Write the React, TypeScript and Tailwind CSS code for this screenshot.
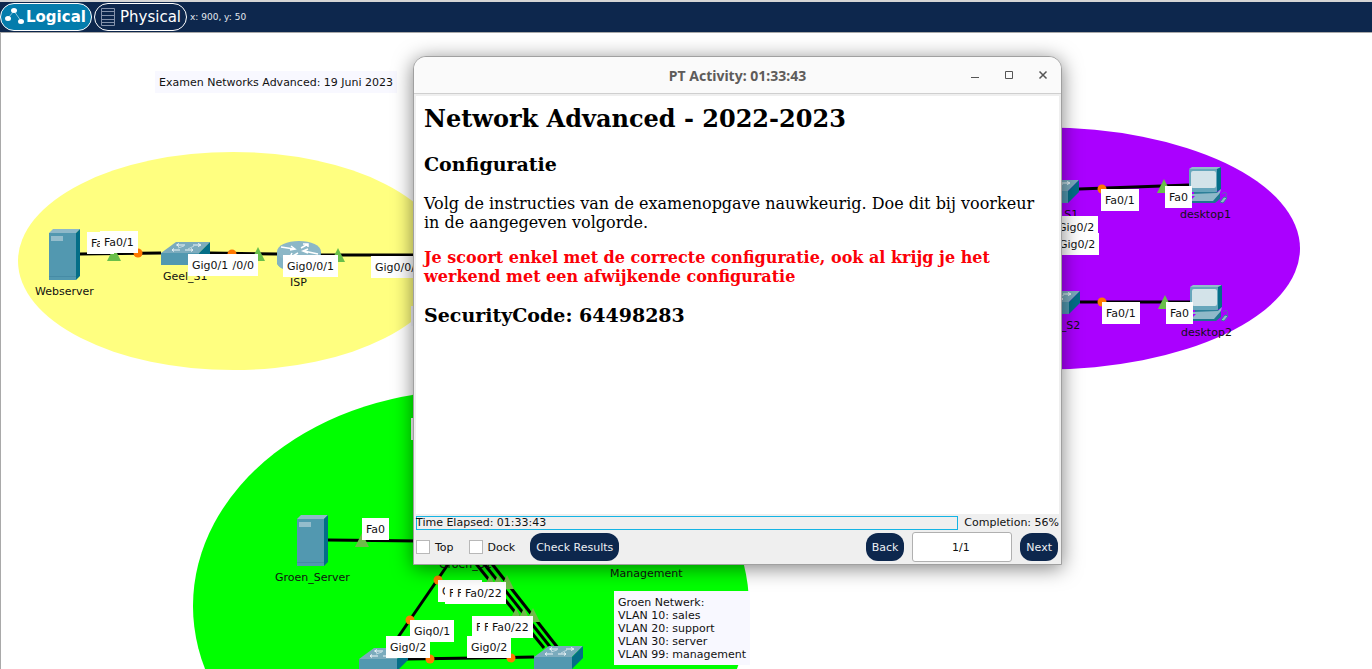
import type { CSSProperties, ReactNode } from "react";

// The inner edge of the canvas frame, in window coordinates.
const ORIGIN = { x: 1, y: 33 };

function place(x: number, y: number): CSSProperties {
  return { left: x - ORIGIN.x, top: y - ORIGIN.y };
}

type Item = { x: number; y: number; text: string };

const deviceNames: Item[] = [
  { x: 35, y: 285, text: "Webserver" },
  { x: 163, y: 270, text: "Geel_S1" },
  { x: 290, y: 276, text: "ISP" },
  { x: 1180, y: 208, text: "desktop1" },
  { x: 1029, y: 208, text: "Paars_S1" },
  { x: 1181, y: 326, text: "desktop2" },
  { x: 1031, y: 319, text: "Paars_S2" },
  { x: 275, y: 571, text: "Groen_Server" },
  { x: 439, y: 558, text: "Groen_S1" },
  { x: 610, y: 567, text: "Management" },
];

const portLabels: Item[] = [
  { x: 87, y: 232, text: "Fa0" },
  { x: 100, y: 231, text: "Fa0/1" },
  { x: 203, y: 254, text: "Gig0/0/0" },
  { x: 188, y: 254, text: "Gig0/1" },
  { x: 283, y: 255, text: "Gig0/0/1" },
  { x: 371, y: 256, text: "Gig0/0/0" },
  { x: 1054, y: 216, text: "Gig0/2" },
  { x: 1055, y: 233, text: "Gig0/2" },
  { x: 1101, y: 189, text: "Fa0/1" },
  { x: 1165, y: 186, text: "Fa0" },
  { x: 1102, y: 302, text: "Fa0/1" },
  { x: 1166, y: 302, text: "Fa0" },
  { x: 362, y: 518, text: "Fa0" },
  { x: 411, y: 418, text: "Fa0/2" },
  { x: 438, y: 580, text: "Gig0/1" },
  { x: 445, y: 582, text: "Fa0/20" },
  { x: 453, y: 582, text: "Fa0/21" },
  { x: 461, y: 582, text: "Fa0/22" },
  { x: 472, y: 616, text: "Fa0/20" },
  { x: 480, y: 616, text: "Fa0/21" },
  { x: 488, y: 616, text: "Fa0/22" },
  { x: 410, y: 620, text: "Gig0/1" },
  { x: 386, y: 636, text: "Gig0/2" },
  { x: 467, y: 636, text: "Gig0/2" },
];

const wires = [
  [80, 254, 161, 253],
  [210, 253, 278, 254],
  [321, 255, 420, 255],
  [1079, 189, 1189, 185],
  [1080, 302, 1190, 302],
  [328, 540, 420, 541],
  [451, 560, 392, 646],
  [407, 659, 534, 657],
  [473, 560, 544, 648],
  [481, 560, 551, 648],
  [489, 560, 558, 648],
];

const upMarks = [
  [114, 247],
  [258, 247],
  [338, 248],
  [1164, 179],
  [1165, 295],
];

const dimMarks = [
  [362, 533],
  [490, 575],
  [498, 575],
  [507, 575],
  [516, 608],
  [524, 608],
  [533, 608],
];

const waitMarks = [
  [138, 253],
  [232, 254],
  [1102, 189],
  [1102, 302],
  [438, 580],
  [410, 620],
  [430, 659],
  [511, 658],
];

function Server({ x, y }: { x: number; y: number }) {
  return (
    <g transform={`translate(${x} ${y})`}>
      <path d="M0 4L4 0H31L27 4Z" fill="#8fb9c9" />
      <path d="M27 4L31 0V47L27 51Z" fill="#046e87" />
      <rect y="4" width="27" height="47" fill="#5298b0" />
      <rect x="2" y="7" width="12" height="5" fill="#94bdcc" />
      <path d="M0 47.5H27" stroke="#468ba5" />
    </g>
  );
}

function Switch({ x, y }: { x: number; y: number }) {
  return (
    <g transform={`translate(${x} ${y})`}>
      <path d="M0 11L15 0H49L38 11Z" fill="#7babbd" />
      <path d="M38 11L49 0V12L38 23Z" fill="#046e87" />
      <rect y="11" width="38" height="12" fill="#5298b0" />
      <g fill="none" stroke="#eef5f8" strokeWidth="1">
        <path d="M24 3H16M18 1.500L15.500 3L18 4.500M32 3H39M37 1.500L40 3L37 4.500" />
        <path d="M19 8H12M13 6.500L11 8L13 9.500M24 8H31M30 6.500L32 8L30 9.500" />
        <path d="M17 6L23 4M27 7L33 4" strokeWidth="0.6" />
      </g>
    </g>
  );
}

function Router({ x, y }: { x: number; y: number }) {
  return (
    <g transform={`translate(${x} ${y})`}>
      <path d="M0 11V22C2 32 42 32 44 22V11Z" fill="#4f96ae" />
      <path d="M0 11V22C1 26 5 28 10 29V17Z" fill="#83b3c3" />
      <ellipse cx="22" cy="10.5" rx="22" ry="10.5" fill="#8cb7c7" />
      <g fill="none" stroke="#fff" strokeWidth="1.5">
        <path d="M4 6L17 8M14 5L18 8L13 9" />
        <path d="M24 7L31 3M26 3H31V6" />
        <path d="M41 13L27 10M31 8L26 10L31 12" />
        <path d="M21 12L14 16M15 12L13 16L18 17" />
      </g>
    </g>
  );
}

function Desktop({ x, y }: { x: number; y: number }) {
  return (
    <g transform={`translate(${x} ${y})`}>
      <path d="M0 2L3 0H32L30 2Z" fill="#91bccb" />
      <path d="M28 2L32 0V22L28 25Z" fill="#046e87" />
      <rect y="2" width="28" height="23" rx="1" fill="#66a6bb" />
      <rect x="2" y="4" width="25" height="17" rx="2" fill="#d3e3e9" />
      <path d="M5 25H29V28H5Z" fill="#2c7f98" />
      <path d="M3 27L28 26L32 22L30 29H2Z" fill="#8fb9c9" />
      <path d="M0 35L6 29H29L24 35Z" fill="#8fb9c9" />
      <path d="M24 34L31 26V32L26 36H0V34Z" fill="#1d7690" />
      <path d="M31 35L35 30L38 31L34 36Z" fill="#8fb9c9" stroke="#33829b" />
      <path d="M33 27C36 24 39 26 37 30" fill="none" stroke="#4b85a0" strokeWidth="0.8" />
    </g>
  );
}

function Topology() {
  return (
    <svg className="absolute inset-0 size-full overflow-visible" aria-hidden="true">
      <g transform={`translate(${-ORIGIN.x} ${-ORIGIN.y})`}>
        <ellipse cx="233" cy="261" rx="215" ry="109" fill="#ffff80" />
        <ellipse cx="1045" cy="248.500" rx="255" ry="121" fill="#aa00ff" />
        <ellipse cx="471" cy="606" rx="278" ry="216" fill="#00ff00" />
        <g stroke="#000" strokeWidth="3">
          {wires.map(([x1, y1, x2, y2], i) => (
            <line key={i} x1={x1} y1={y1} x2={x2} y2={y2} />
          ))}
        </g>
        <Server x={49} y={229} />
        <Server x={297} y={515} />
        <Switch x={161} y={242} />
        <Switch x={1030} y={180} />
        <Switch x={1031} y={291} />
        <Switch x={359} y={648} />
        <Switch x={534} y={646} />
        <Router x={277} y={241} />
        <Desktop x={1189} y={167} />
        <Desktop x={1190} y={285} />
        {waitMarks.map(([x, y], i) => (
          <circle key={i} cx={x} cy={y} r="4.500" fill="#ff7800" />
        ))}
        {upMarks.map(([x, y], i) => (
          <path key={i} d={`M${x} ${y}l7 14h-14z`} fill="#69bf4a" />
        ))}
        {dimMarks.map(([x, y], i) => (
          <path key={i} d={`M${x} ${y}l7 14h-14z`} fill="#70bb4a" />
        ))}
      </g>
    </svg>
  );
}

function Toolbar() {
  return (
    <header className="flex h-8 shrink-0 items-center gap-[2px] border-t-2 border-[#d5d5d5] bg-[#0d274d]">
      <button className="flex h-7 w-[92px] items-center gap-[2px] rounded-full border border-white bg-[#047cac] pl-[3px] text-[15px] font-bold text-white">
        <svg className="h-5 w-5" viewBox="0 0 20 20" aria-hidden="true">
          <path d="M4 11L10 4L17 14" fill="none" stroke="#8cc4dd" strokeWidth="1" />
          <ellipse cx="4" cy="11.500" rx="3" ry="2.500" fill="#fff" />
          <ellipse cx="10" cy="3.500" rx="3" ry="2.500" fill="#fff" />
          <ellipse cx="17" cy="14.500" rx="3" ry="2.500" fill="#fff" />
        </svg>
        Logical
      </button>
      <button className="flex h-7 w-[93px] items-center gap-1 rounded-full border border-white pl-[5px] text-[15px] text-white">
        <svg className="h-5 w-4" viewBox="0 0 16 20" aria-hidden="true">
          <path
            d="M1.500 1.500H14.500V18.500H1.500ZM1.500 4.500H14.500M1.500 8.500H14.500M1.500 12.500H14.500M1.500 15.500H14.500"
            fill="none"
            stroke="#8492ab"
          />
        </svg>
        Physical
      </button>
      <span className="pl-px text-[9px] text-[#e3e7ee]">x: 900, y: 50</span>
    </header>
  );
}

function PillButton({ children }: { children: ReactNode }) {
  return (
    <button className="h-7 rounded-[12px] bg-[#0d274d] px-[6px] text-[11px] text-[#eef0f4]">{children}</button>
  );
}

function Tick({ label }: { label: string }) {
  return (
    <label className="flex items-center gap-[5px]">
      <input type="checkbox" className="size-[14px] appearance-none border border-[#b8b8b8] bg-white" />
      {label}
    </label>
  );
}

function ActivityWindow() {
  return (
    <section
      className="absolute flex w-[649px] flex-col overflow-hidden rounded-t-[13px] border border-[#a0a0a0] bg-[#efefef] shadow-[0_3px_20px_rgba(0,0,0,0.5)]"
      style={place(413, 56)}
      aria-label="PT Activity"
    >
      <div className="grid h-[37px] shrink-0 grid-cols-[1fr_auto_1fr] items-center border-b border-[#cfcfcf] bg-[#fafafa] text-[#555]">
        <h1 className="col-start-2 font-['Noto_Sans',sans-serif] text-[14px] font-bold text-[#5e5c5a]">
          PT Activity: 01:33:43
        </h1>
        <div className="flex items-center justify-end gap-[18px] pr-[10px]">
          {[
            { name: "Minimize", d: "M4 10.500H12" },
            { name: "Maximize", d: "M4.500 4.500H11.500V11.500H4.500Z" },
            { name: "Close", d: "M4.500 4.500L11.500 11.500M11.500 4.500L4.500 11.500" },
          ].map(({ name, d }) => (
            <button key={name} aria-label={name} className="size-4">
              <svg viewBox="0 0 16 16" className="size-4" fill="none" stroke="currentColor" aria-hidden="true">
                <path d={d} strokeWidth={name === "Close" ? 1.5 : 1} />
              </svg>
            </button>
          ))}
        </div>
      </div>
      <article className="mx-[2px] mt-[2px] min-h-[418px] bg-white px-2 pt-[9px] font-['DejaVu_Serif',serif] text-[16px] leading-[19px] text-black">
        <h2 className="text-[24px] leading-7 font-bold">Network Advanced - 2022-2023</h2>
        <h3 className="mt-5 text-[19px] leading-[22px] font-bold">Configuratie</h3>
        <p className="mt-[19px]">
          Volg de instructies van de examenopgave nauwkeurig. Doe dit bij voorkeur
          <br />
          in de aangegeven volgorde.
        </p>
        <p className="mt-4 font-bold text-[#fb0007]">
          Je scoort enkel met de correcte configuratie, ook al krijg je het
          <br />
          werkend met een afwijkende configuratie
        </p>
        <h3 className="mt-[18px] text-[19px] leading-[22px] font-bold">SecurityCode: 64498283</h3>
      </article>
      <div className="mx-[2px] mt-[2px] flex h-[14px] shrink-0 items-center gap-[6px] leading-[14px]">
        <div className="flex h-[14px] flex-1 items-center shadow-[inset_0_0_0_1px_#14b4e4]">Time Elapsed: 01:33:43</div>
        <span>Completion: 56%</span>
      </div>
      <div className="flex h-[34px] shrink-0 items-center gap-2 pr-[3px] pl-[2px]">
        <div className="flex flex-1 items-center gap-[15px]">
          <Tick label="Top" />
          <Tick label="Dock" />
          <PillButton>Check Results</PillButton>
        </div>
        <PillButton>Back</PillButton>
        <input
          aria-label="Page"
          defaultValue="1/1"
          className="h-[30px] w-[100px] rounded-[3px] border border-[#b0b0b0] bg-white pr-[3px] text-center text-[11px]"
        />
        <PillButton>Next</PillButton>
      </div>
    </section>
  );
}

export default function App() {
  return (
    <div className="flex min-h-screen flex-col bg-white font-['DejaVu_Sans',sans-serif] text-[11px] leading-[13px] text-[#111]">
      <Toolbar />
      <main className="relative flex-1 overflow-hidden border-t border-l border-[#a9a9a9] whitespace-nowrap">
        <Topology />
        {deviceNames.map(({ x, y, text }) => (
          <span key={text} className="absolute" style={place(x, y)}>
            {text}
          </span>
        ))}
        {portLabels.map(({ x, y, text }, i) => (
          <span key={i} className="absolute h-[22px] bg-white px-1 leading-6" style={place(x, y)}>
            {text}
          </span>
        ))}
        <p className="absolute h-[22px] bg-[#f8f8ff] px-1 leading-6" style={place(155, 71)}>
          Examen Networks Advanced: 19 Juni 2023
        </p>
        <div className="absolute h-5 w-10 bg-[#f8f8ff]" style={place(411, 306)} />
        <div className="absolute bg-[#f8f8ff] px-1 pt-[5px] pb-1" style={place(614, 591)}>
          <p>Groen Netwerk:</p>
          <p>VLAN 10: sales</p>
          <p>VLAN 20: support</p>
          <p>VLAN 30: server</p>
          <p>VLAN 99: management</p>
        </div>
        <ActivityWindow />
      </main>
    </div>
  );
}
